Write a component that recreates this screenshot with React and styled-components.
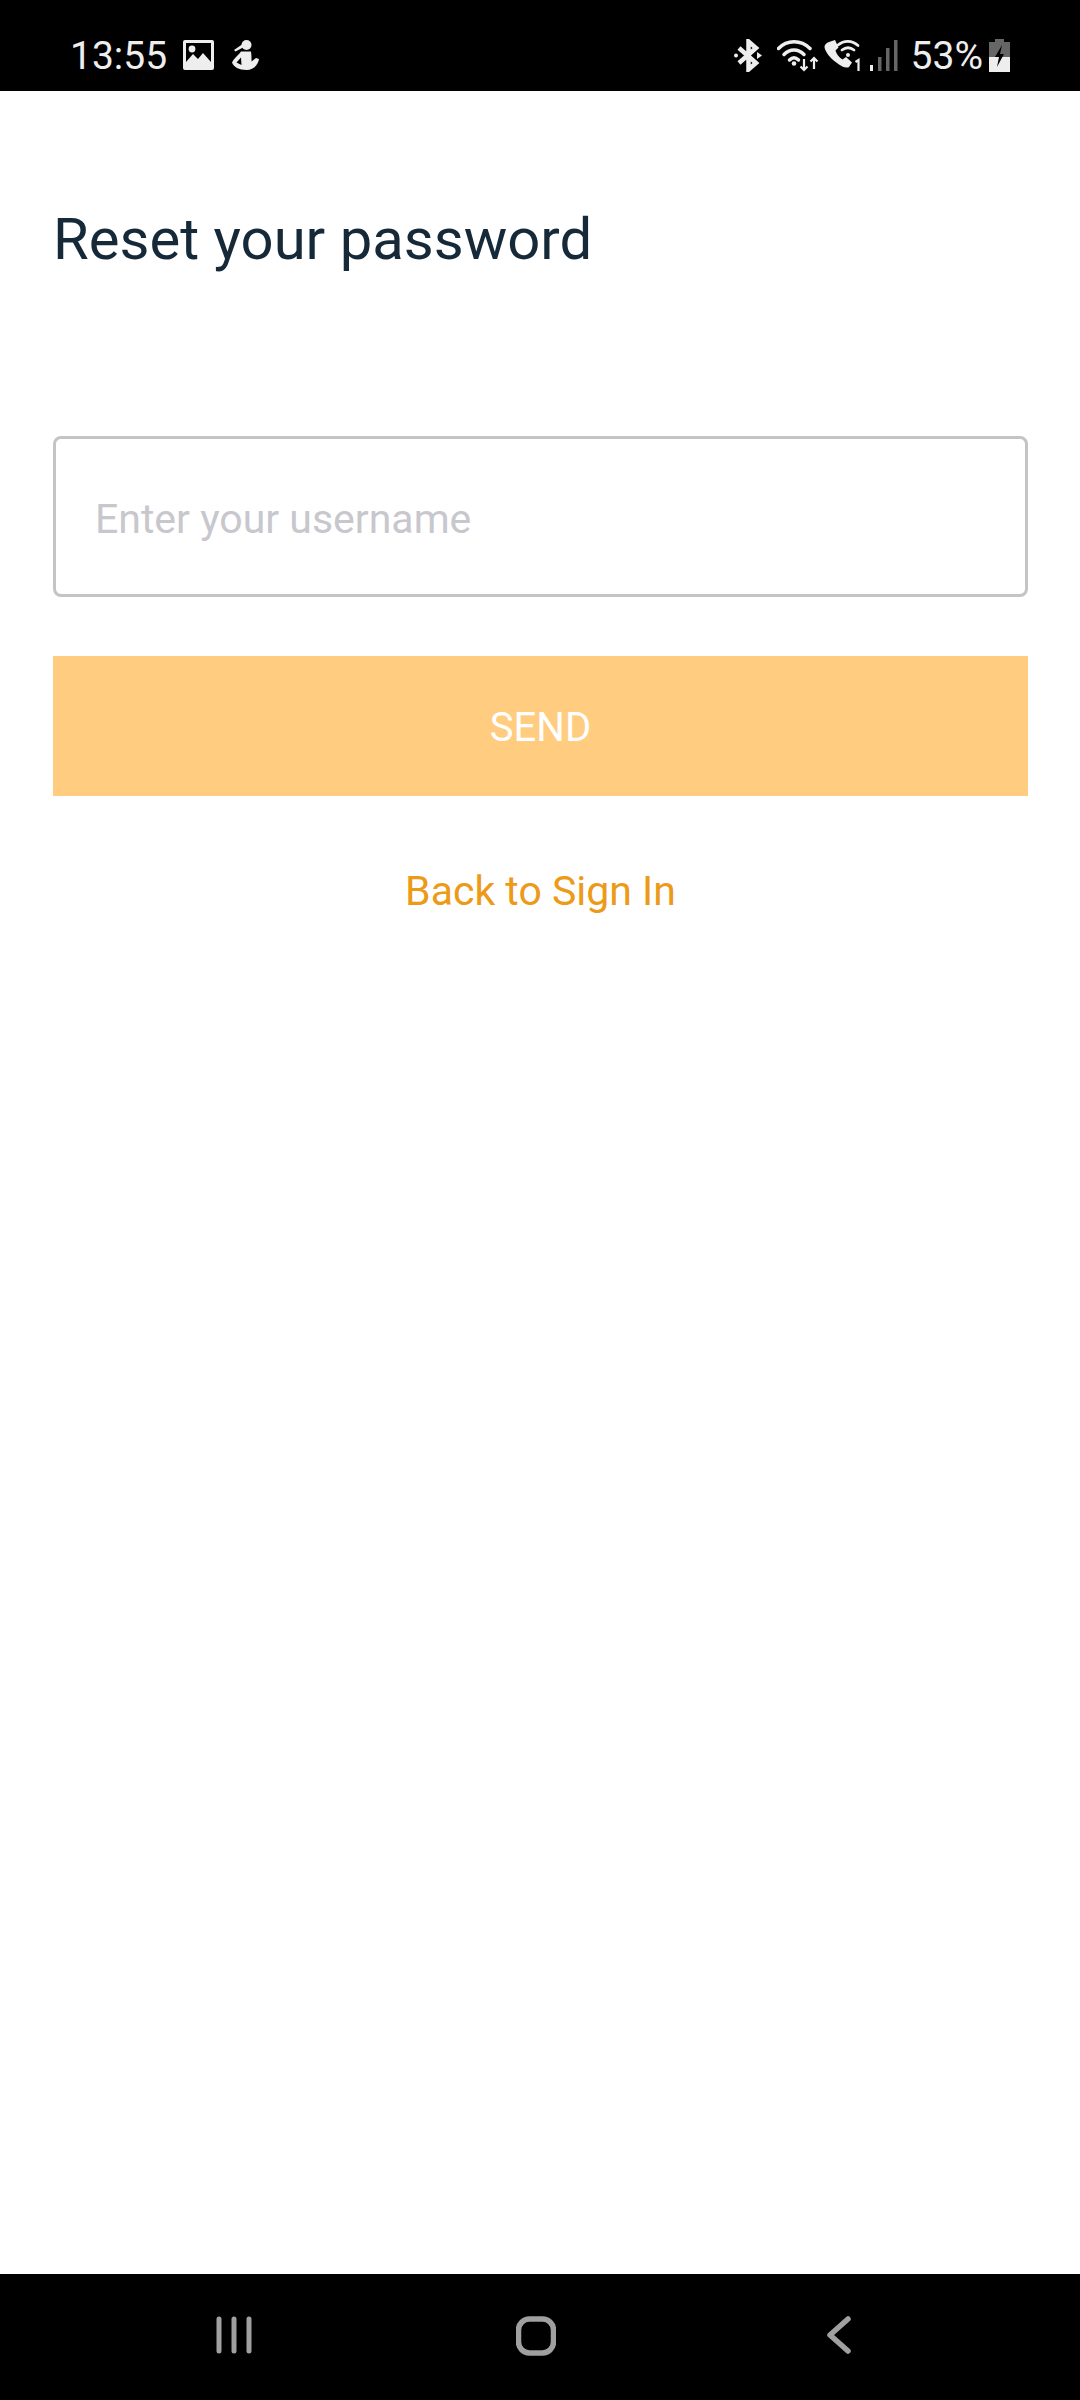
import React from 'react'
import styled, { createGlobalStyle } from 'styled-components'

const GlobalStyle = createGlobalStyle`
  html, body {
    margin: 0;
    padding: 0;
    background: #fff;
  }
  * {
    box-sizing: border-box;
  }
`

const Screen = styled.div`
  width: 1080px;
  height: 2400px;
  display: flex;
  flex-direction: column;
  font-family: Roboto, "Liberation Sans", sans-serif;
  background: #fff;
`

const StatusBar = styled.div`
  height: 91px;
  background: #000;
  color: #eee;
  display: flex;
  align-items: flex-start;
  justify-content: space-between;
  padding: 32px 70px 0 70px;
`

const StatusGroup = styled.div`
  display: flex;
  align-items: center;
  height: 46px;
`

const StatusText = styled.span`
  font-size: 39px;
  line-height: 46px;
  padding-top: 2px;
  color: #eee;
  margin-right: ${props => props.$right || 0}px;
`

const Glyph = styled.svg`
  display: block;
  flex: none;
  margin-right: ${props => props.$right || 0}px;
`

const Main = styled.main`
  flex: 1;
  padding: 0 52px 0 53px;
  display: flex;
  flex-direction: column;
`

const Title = styled.h1`
  margin: 115px 0 0 0;
  font-size: 58px;
  line-height: 66px;
  font-weight: 400;
  color: #152939;
`

const UsernameInput = styled.input`
  display: block;
  width: 975px;
  height: 161px;
  margin: 164px 0 0 0;
  padding: 5px 39px 0 39px;
  border: 3px solid #c4c4c4;
  border-radius: 8px;
  background: #fff;
  font-family: inherit;
  font-size: 41px;
  color: #152939;
  outline: none;

  &::placeholder {
    color: #c7c7cd;
    opacity: 1;
  }
`

const SendButton = styled.button`
  display: block;
  width: 975px;
  height: 140px;
  margin-top: 59px;
  padding: 3px 0 0 0;
  border: none;
  background: #ffcc80;
  color: #fff;
  font-family: inherit;
  font-size: 40px;
  text-transform: uppercase;
`

const BackLink = styled.a`
  display: block;
  margin-top: 70px;
  text-align: center;
  font-size: 41px;
  line-height: 50px;
  color: #ec9a17;
`

const NavBar = styled.nav`
  height: 126px;
  background: #000;
  display: grid;
  grid-template-columns: 216px 36px 264px 40px 270px 25px;
  padding-top: 42px;
  align-items: start;
`

const NavSlot = styled.div`
  grid-column: ${props => props.$col};
`

const NavGlyph = styled.svg`
  display: block;
`

function PictureIcon() {
  return (
    <Glyph width="31" height="30" viewBox="0 0 31 30" $right={18}>
      <path fill="#eee" fillRule="evenodd" d="M2 0h27a2 2 0 0 1 2 2v26a2 2 0 0 1-2 2H2a2 2 0 0 1-2-2V2a2 2 0 0 1 2-2zm1 3v19l7-8 5 5 5-6 8 9V3z" />
      <circle cx="9" cy="9" r="3.400" fill="#eee" />
    </Glyph>
  )
}

function PersonIcon() {
  return (
    <Glyph width="27" height="30" viewBox="0 0 27 30">
      <circle cx="14.500" cy="5" r="5" fill="#eee" />
      <path fill="#eee" d="M10 4.500l1 3L3.500 11.500 2 10z" />
      <path fill="#eee" fillRule="evenodd" d="M9 11.500h10c.6 3.500.5 7 .5 10l4.500-3.500 3 1c-.6 5-5 11-12.500 11C7 30 1.500 27 0 22.500c1.500-3.500 5-6.500 7.500-9zM9 17.500l-4.500 5 5 2.500z" />
    </Glyph>
  )
}

function BluetoothIcon() {
  return (
    <Glyph width="29" height="33" viewBox="0 0 29 33" $right={14}>
      <path fill="none" stroke="#eee" strokeWidth="4.500" d="M5 9l17 15-7.500 6.500V2.500L22 9 5 24" />
      <circle cx="2" cy="16.500" r="2" fill="#eee" />
      <path fill="#eee" d="M23 13l5 3.500-5 3.500z" />
    </Glyph>
  )
}

function WifiIcon() {
  return (
    <Glyph width="42" height="33" viewBox="0 0 42 33" $right={5}>
      <g fill="none" stroke="#eee" strokeWidth="3.500" strokeLinecap="round">
        <path d="M1.500 9.500C10 .5 24 .5 33 9.500" />
        <path d="M7 15.500c6-6 14-6 20 0" />
        <path d="M12.500 21c3-3 6-3 9 0" />
      </g>
      <circle cx="17" cy="24.500" r="2.300" fill="#eee" />
      <g fill="none" stroke="#eee" strokeWidth="2.200">
        <path d="M27 20v11M23.500 27.500l3.500 3.500 3.500-3.500" />
        <path d="M37 30V19M33.500 22.500l3.500-3.500 3.500 3.500" />
      </g>
    </Glyph>
  )
}

function CallWifiIcon() {
  return (
    <Glyph width="38" height="33" viewBox="0 0 38 33" $right={8}>
      <path fill="#eee" d="M5 3l6-2 3.500 7.500-3 3c.8 3.500 3.500 7 7 9l3.500-2.500 6 5.500-3 4.500c-3 1.500-8-.5-12-4C5.500 19 1 12 .5 8 .5 5.500 2.500 4 5 3z" />
      <g fill="none" stroke="#eee" strokeWidth="2.800" strokeLinecap="round">
        <path d="M14 6c6-5 14-5 20 .5" />
        <path d="M18 11c4-3 8-3 12 0" />
      </g>
      <circle cx="24" cy="16" r="2" fill="#eee" />
      <path fill="none" stroke="#eee" strokeWidth="2.200" d="M31.500 23l3-2v11" />
    </Glyph>
  )
}

function SignalIcon() {
  return (
    <Glyph width="28" height="31" viewBox="0 0 28 31" $right={13}>
      <rect x="0" y="25" width="3" height="6" fill="#eee" />
      <rect x="8" y="17" width="3.500" height="14" fill="#666" />
      <rect x="16" y="8" width="3.500" height="23" fill="#666" />
      <rect x="24" y="0" width="3.500" height="31" fill="#666" />
    </Glyph>
  )
}

function BatteryIcon() {
  return (
    <Glyph width="21" height="33" viewBox="0 0 21 33">
      <path fill="#666" d="M6 0h9v3h6v15H0V3h6z" />
      <rect x="0" y="18" width="21" height="15" fill="#eee" />
      <path fill="#000" d="M13 6l-7 12h4l-2 10 7-13h-4z" />
    </Glyph>
  )
}

function RecentsIcon() {
  return (
    <NavGlyph width="36" height="38" viewBox="0 0 36 38">
      <g stroke="#a0a0a0" strokeWidth="5" strokeLinecap="round">
        <path d="M3 3v32M18 3v32M33 3v32" />
      </g>
    </NavGlyph>
  )
}

function HomeIcon() {
  return (
    <NavGlyph width="40" height="40" viewBox="0 0 40 40">
      <rect x="2.500" y="3" width="35" height="34" rx="11" fill="none" stroke="#a0a0a0" strokeWidth="5.500" />
    </NavGlyph>
  )
}

function BackIcon() {
  return (
    <NavGlyph width="25" height="38" viewBox="0 0 25 38">
      <path d="M22 3L4 19l18 16" fill="none" stroke="#a0a0a0" strokeWidth="5.500" strokeLinecap="round" strokeLinejoin="round" />
    </NavGlyph>
  )
}

export default function App() {
  return (
    <Screen>
      <GlobalStyle />
      <StatusBar>
        <StatusGroup>
          <StatusText $right={16}>13:55</StatusText>
          <PictureIcon />
          <PersonIcon />
        </StatusGroup>
        <StatusGroup>
          <BluetoothIcon />
          <WifiIcon />
          <CallWifiIcon />
          <SignalIcon />
          <StatusText $right={6}>53%</StatusText>
          <BatteryIcon />
        </StatusGroup>
      </StatusBar>
      <Main>
        <Title>Reset your password</Title>
        <UsernameInput placeholder="Enter your username" />
        <SendButton>Send</SendButton>
        <BackLink>Back to Sign In</BackLink>
      </Main>
      <NavBar>
        <NavSlot $col={2}><RecentsIcon /></NavSlot>
        <NavSlot $col={4}><HomeIcon /></NavSlot>
        <NavSlot $col={6}><BackIcon /></NavSlot>
      </NavBar>
    </Screen>
  )
}
